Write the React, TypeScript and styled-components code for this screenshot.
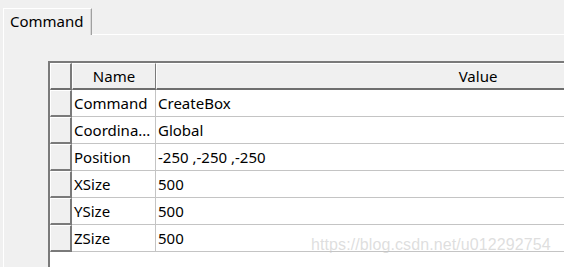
import React from 'react';
import styled, { createGlobalStyle } from 'styled-components';

const rows = [
  { name: 'Command', value: 'CreateBox' },
  { name: 'Coordina...', value: 'Global' },
  { name: 'Position', value: '-250 ,-250 ,-250' },
  { name: 'XSize', value: '500' },
  { name: 'YSize', value: '500' },
  { name: 'ZSize', value: '500' },
];

const App = () => {
  return (
    <Window>
      <GlobalStyle />
      <TabStrip>
        <Tab>Command</Tab>
        <TabFiller />
      </TabStrip>
      <Panel>
        <Grid>
          <HeadCell $selector />
          <HeadCell>Name</HeadCell>
          <HeadCell>Value</HeadCell>
          {rows.map((row) => (
            <React.Fragment key={row.name}>
              <SelectorCell />
              <Cell>{row.name}</Cell>
              <Cell>{row.value}</Cell>
            </React.Fragment>
          ))}
        </Grid>
      </Panel>
      <Watermark>https://blog.csdn.net/u012292754</Watermark>
    </Window>
  );
};

export default App;

const GlobalStyle = createGlobalStyle`
  html, body {
    margin: 0;
    padding: 0;
    background: #f0f0f0;
    overflow: hidden;
  }
`;

const Window = styled.div({
  position: 'relative',
  width: 564,
  height: 267,
  overflow: 'hidden',
  background: '#f0f0f0',
  fontFamily: '"Noto Sans", "Open Sans", sans-serif',
  fontSize: 15,
  color: '#000',
});

const TabStrip = styled.div({
  display: 'flex',
  alignItems: 'flex-end',
  paddingTop: 8,
  paddingLeft: 3,
});

const Tab = styled.div({
  boxSizing: 'border-box',
  width: 89,
  height: 27,
  paddingLeft: 6,
  lineHeight: '24px',
  borderTop: '1px solid #ffffff',
  borderLeft: '1px solid #ffffff',
  borderRight: '1px solid #a0a0a0',
  boxShadow: 'inset -1px 0 0 #d8d8d8',
  background: '#f0f0f0',
  whiteSpace: 'nowrap',
});

const TabFiller = styled.div({
  flex: 1,
  borderBottom: '1px solid #ffffff',
});

const Panel = styled.div({
  marginLeft: 3,
  borderLeft: '1px solid #ffffff',
  height: 300,
  padding: '26px 0 0 44px',
});

const Grid = styled.div({
  display: 'grid',
  gridTemplateColumns: '22px 84px 644px',
  gridAutoRows: '27px',
  gridTemplateRows: '27px',
  width: 750,
  height: 260,
  alignContent: 'start',
  background: '#ffffff',
  borderTop: '2px solid #7a7a7a',
  borderLeft: '2px solid #7a7a7a',
});

const HeadCell = styled.div<{ $selector?: boolean }>(({ $selector }) => ({
  boxSizing: 'border-box',
  background: '#f0f0f0',
  borderTop: '1px solid #ffffff',
  borderLeft: '1px solid #ffffff',
  borderRight: $selector ? '2px solid #7a7a7a' : '1px solid #7a7a7a',
  borderBottom: '2px solid #6e6e6e',
  display: 'flex',
  alignItems: 'center',
  justifyContent: 'center',
  lineHeight: '20px',
}));

const SelectorCell = styled.div({
  boxSizing: 'border-box',
  background: '#f0f0f0',
  borderTop: '1px solid #ffffff',
  borderLeft: '1px solid #ffffff',
  borderRight: '2px solid #7a7a7a',
  borderBottom: '2px solid #7a7a7a',
});

const Cell = styled.div({
  boxSizing: 'border-box',
  borderRight: '1px solid #c4c4c4',
  borderBottom: '1px solid #c4c4c4',
  padding: '0 0 0 2px',
  lineHeight: '26px',
  whiteSpace: 'nowrap',
  overflow: 'hidden',
});

const Watermark = styled.div({
  position: 'absolute',
  left: 311,
  top: 236,
  fontFamily: '"Liberation Sans", Arial, sans-serif',
  fontSize: 16,
  letterSpacing: 0.1,
  color: 'rgba(200, 200, 200, 0.6)',
  whiteSpace: 'nowrap',
  pointerEvents: 'none',
});
